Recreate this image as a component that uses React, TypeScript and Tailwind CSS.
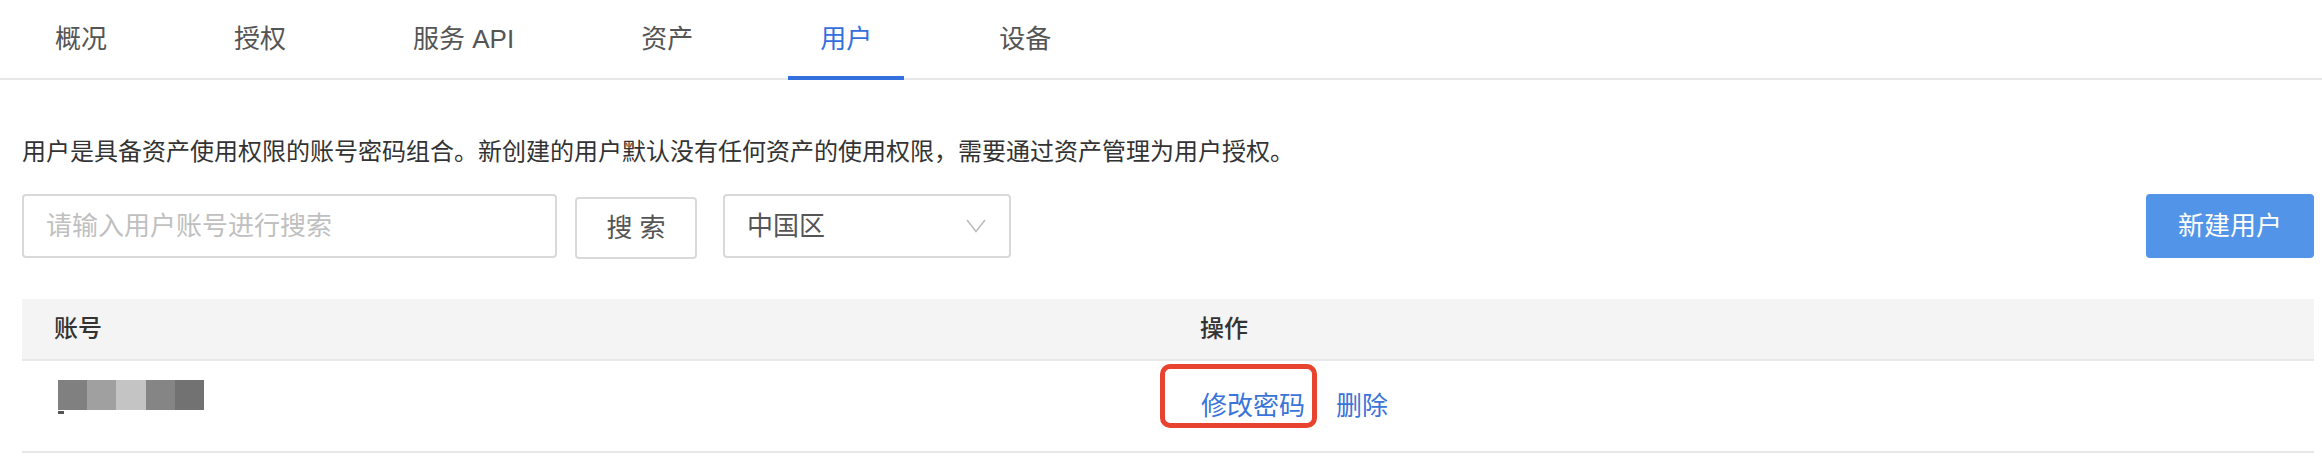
import { useState } from "react";

const TABS = ["概况", "授权", "服务 API", "资产", "用户", "设备"];

const USERS = [{ id: 1, blocks: ["#808080", "#a0a0a0", "#c4c4c4", "#858585", "#727272"] }];

function Tabs({ active, onChange }: { active: string; onChange: (t: string) => void }) {
  return (
    <div className="flex gap-[63px] border-b-2 border-[#e8e8e8] pl-[23px]">
      {TABS.map((t) => {
        const on = t === active;
        return (
          <button
            key={t}
            onClick={() => onChange(t)}
            className={`-mb-[2px] flex h-[80px] items-center border-b-4 px-[32px] pt-[2px] text-[26px] leading-none ${
              on ? "border-[#3370dd] text-[#3370dd]" : "border-transparent text-[#555]"
            }`}
          >
            {t}
          </button>
        );
      })}
    </div>
  );
}

function Chevron() {
  return (
    <svg width="20" height="14" viewBox="0 0 20 14" fill="none">
      <path d="M1 1 L10 12.5 L19 1" stroke="#bdbdbd" strokeWidth="1.6" />
    </svg>
  );
}

export default function App() {
  const [tab, setTab] = useState("用户");
  const [query, setQuery] = useState("");

  return (
    <div className="h-[464px] w-[2322px] bg-white font-['Liberation_Sans','Noto_Sans_CJK_SC',sans-serif]">
      <Tabs active={tab} onChange={setTab} />

      <div className="pl-[22px] pr-[8px]">
        <p className="mt-[54px] text-[24px] leading-[36px] text-[#333]">
          用户是具备资产使用权限的账号密码组合。新创建的用户默认没有任何资产的使用权限，需要通过资产管理为用户授权。
        </p>

        {/* Toolbar */}
        <div className="mt-[24px] flex items-start">
          <input
            value={query}
            onChange={(e) => setQuery(e.target.value)}
            placeholder="请输入用户账号进行搜索"
            className="h-[64px] w-[535px] rounded-[4px] border-2 border-[#d9d9d9] px-[22px] text-[26px] text-[#333] outline-none placeholder:text-[#c0c0c0]"
          />
          <button className="ml-[18px] mt-[3px] h-[62px] w-[122px] rounded-[4px] border-2 border-[#d9d9d9] text-[26px] leading-none text-[#555]">
            搜 索
          </button>
          <div className="ml-[26px] flex h-[64px] w-[288px] items-center justify-between rounded-[4px] border-2 border-[#d9d9d9] pl-[22px] pr-[23px] text-[26px] text-[#555]">
            <span>中国区</span>
            <Chevron />
          </div>
          <button className="ml-auto h-[64px] w-[168px] rounded-[4px] bg-[#5294e8] text-[26px] leading-none text-white">
            新建用户
          </button>
        </div>

        {/* Table */}
        <div className="mt-[40px]">
          <div className="grid h-[62px] grid-cols-2 border-b-2 border-[#e8e8e8] bg-[#f4f4f4] text-[24px] font-medium text-[#333]">
            <div className="flex items-center px-[32px]">账号</div>
            <div className="flex items-center px-[32px]">操作</div>
          </div>
          {USERS.map((u) => (
            <div key={u.id} className="grid h-[92px] grid-cols-2 border-b-2 border-[#e8e8e8]">
              <div className="flex flex-col justify-center px-[36px] pb-[18px]">
                <div className="flex h-[30px] w-[146px]">
                  {u.blocks.map((c, i) => (
                    <span key={i} className="h-full flex-1" style={{ background: c }} />
                  ))}
                </div>
                <span className="mt-[1px] h-[3px] w-[6px] bg-[#555]" />
              </div>
              <div className="flex items-center gap-[31px] px-[33px] text-[26px] text-[#3a74d9]">
                <span className="relative">
                  修改密码
                  <span className="absolute -left-[41px] -right-[12px] -top-[23px] -bottom-[2px] rounded-[10px] border-[5px] border-[#e8432e]" />
                </span>
                <span>删除</span>
              </div>
            </div>
          ))}
        </div>
      </div>
    </div>
  );
}
